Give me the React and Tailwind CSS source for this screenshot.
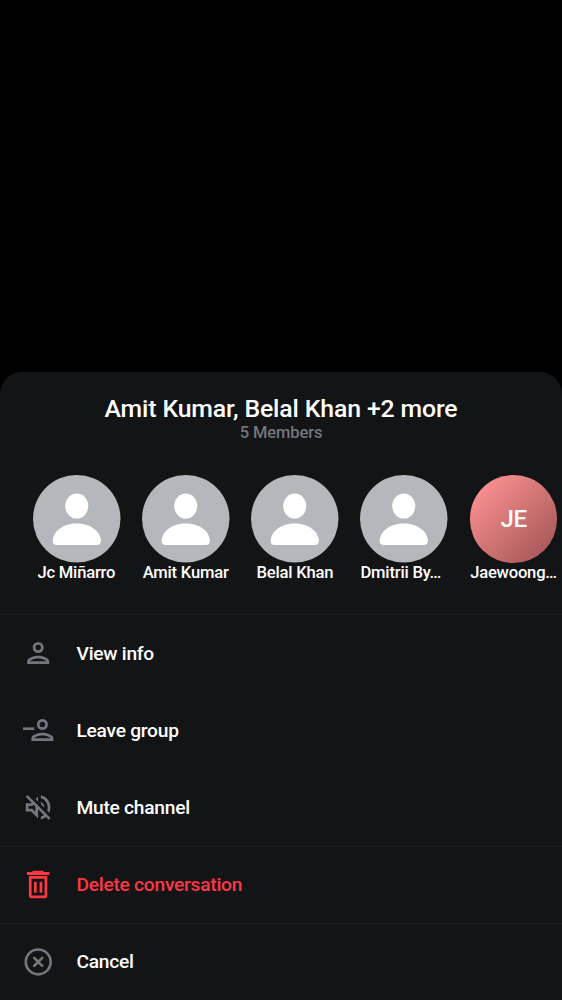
import React from "react";

const members = [
  { name: "Jc Miñarro" },
  { name: "Amit Kumar" },
  { name: "Belal Khan" },
  { name: "Dmitrii By…", start: true },
  { name: "Jaewoong…", initials: "JE" },
];

const PERSON =
  "M12 4a4 4 0 1 0 0 8 4 4 0 0 0 0-8zm0 2a2 2 0 1 1 0 4 2 2 0 0 1 0-4zM12 14c-2.67 0-8 1.34-8 4v2h16v-2c0-2.66-5.33-4-8-4zm6 4H6c.22-.72 3.31-2 6-2 2.7 0 5.8 1.29 6 2z";

const VOLUME_OFF =
  "M4.34 2.93L2.93 4.34 7.29 8.7 7 9H3v6h4l5 5v-6.59l4.18 4.18c-.65.49-1.38.88-2.18 1.11v2.06c1.34-.3 2.57-.92 3.61-1.75l2.05 2.05 1.41-1.41L4.34 2.93zM10 15.17L7.83 13H5v-2h2.83l.88-.88L10 11.41v3.76zM19 12c0 .82-.15 1.61-.41 2.34l1.53 1.53c.56-1.17.88-2.48.88-3.87 0-4.28-2.99-7.86-7-8.77v2.06c2.89.86 5 3.54 5 6.71zm-7-8l-1.88 1.88L12 7.76zm4.5 8c0-1.77-1.02-3.29-2.5-4.03v1.79l2.48 2.48c.01-.08.02-.16.02-.24z";

function Icon({ children }) {
  return (
    <svg viewBox="0 0 36 36" className="size-9 shrink-0" fill="currentColor">
      {children}
    </svg>
  );
}

const ViewIcon = () => (
  <Icon>
    <path transform="translate(1.7 1.5) scale(1.375)" d={PERSON} />
  </Icon>
);

const LeaveIcon = () => (
  <Icon>
    <path transform="translate(5.9 1.5) scale(1.375)" d={PERSON} />
    <path d="M3 15.4h11.2v2.6H3z" />
  </Icon>
);

const MuteIcon = () => (
  <Icon>
    <path transform="translate(1.6 1.9) scale(1.375)" d={VOLUME_OFF} />
  </Icon>
);

const TrashIcon = () => (
  <Icon>
    <path d="M13.2 3.8h9.6l1.3 1.300h5.200v2.800H6.900V5.100h5z" />
    <path
      fillRule="evenodd"
      d="M8.9 9.1h18.4v19.400a2.700 2.700 0 0 1-2.700 2.700h-13a2.700 2.700 0 0 1-2.700-2.700zM11.600 11.800v16.700h13V11.800z"
    />
    <path d="M14 14.800h2.700v11H14zM19.600 14.800h2.700v11h-2.700z" />
  </Icon>
);

const CloseIcon = () => (
  <Icon>
    <circle cx="18.2" cy="17.9" r="12.4" fill="none" stroke="currentColor" strokeWidth="2.7" />
    <path
      d="M14.2 13.9l8 8M22.2 13.9l-8 8"
      fill="none"
      stroke="currentColor"
      strokeWidth="2.7"
      strokeLinecap="round"
    />
  </Icon>
);

const actions = [
  { label: "View info", icon: ViewIcon, row: "h-[77px] border-[#1c1e22]", text: "pt-[2px] text-white" },
  { label: "Leave group", icon: LeaveIcon, row: "h-[77px] border-[#17181a]", text: "pt-[2px] text-white" },
  { label: "Mute channel", icon: MuteIcon, row: "mb-px h-[77px] border-transparent", text: "pt-[2px] text-white" },
  { label: "Delete conversation", icon: TrashIcon, row: "h-[77px] border-[#1c1e22]", text: "text-[#ff3742]", danger: true },
  { label: "Cancel", icon: CloseIcon, row: "h-[76px] border-[#1c1e22]", text: "pt-px text-white" },
];

function Avatar({ initials }) {
  if (initials) {
    return (
      <div className="flex size-[87.5px] items-center justify-center rounded-full bg-linear-135 from-[#fb9090] from-12% to-[#9c5252] to-100% text-[24px] font-medium tracking-[-0.3px] text-white">
        {initials}
      </div>
    );
  }
  return (
    <svg viewBox="0 0 88 88" className="size-[87.5px] overflow-visible">
      <circle cx="44" cy="44" r="44" fill="#b4b7bb" />
      <ellipse cx="44" cy="31.2" rx="11.6" ry="12.6" fill="#fff" />
      <path
        d="M19.8 66.5C19.8 56 31 48.7 44 48.7S68.2 56 68.2 66.5c0 2.5-1.3 4-4 4H23.8c-2.7 0-4-1.5-4-4z"
        fill="#fff"
      />
    </svg>
  );
}

export default function App() {
  return (
    <div className="flex h-[1000px] w-[562px] flex-col justify-end overflow-hidden bg-black font-['Roboto','Noto_Sans',sans-serif] text-white">
      <section className="flex h-[628px] flex-col rounded-t-[22px] bg-[#131416]">
        <header className="flex flex-col items-center pt-[22px]">
          <h1 className="text-[24.8px] leading-[29px] font-medium tracking-[-0.13px]">Amit Kumar, Belal Khan +2 more</h1>
          <p className="text-[16.5px] leading-[20px] font-medium tracking-[-0.1px] text-[#72767e]">5 Members</p>
        </header>
        <ul className="mt-[32px] ml-[32.6px] flex h-[139px] gap-[21.8px]">
          {members.map((m) => (
            <li key={m.name} className="flex w-[87.5px] shrink-0 flex-col items-center">
              <Avatar initials={m.initials} />
              <span
                className={`text-[16.6px] leading-[20px] font-medium tracking-[-0.2px] whitespace-nowrap ${
                  m.start ? "self-start" : ""
                }`}
              >
                {m.name}
              </span>
            </li>
          ))}
        </ul>
        <nav className="flex flex-col">
          {actions.map(({ label, icon: Glyph, row, text, danger }) => (
            <button
              key={label}
              className={`flex items-center gap-[20.5px] border-t pl-5 text-left ${row} ${
                danger ? "text-[#ff3742]" : "text-[#72767e]"
              }`}
            >
              <Glyph />
              <span className={`text-[19.2px] leading-6 font-medium tracking-[-0.26px] ${text}`}>{label}</span>
            </button>
          ))}
        </nav>
      </section>
    </div>
  );
}
